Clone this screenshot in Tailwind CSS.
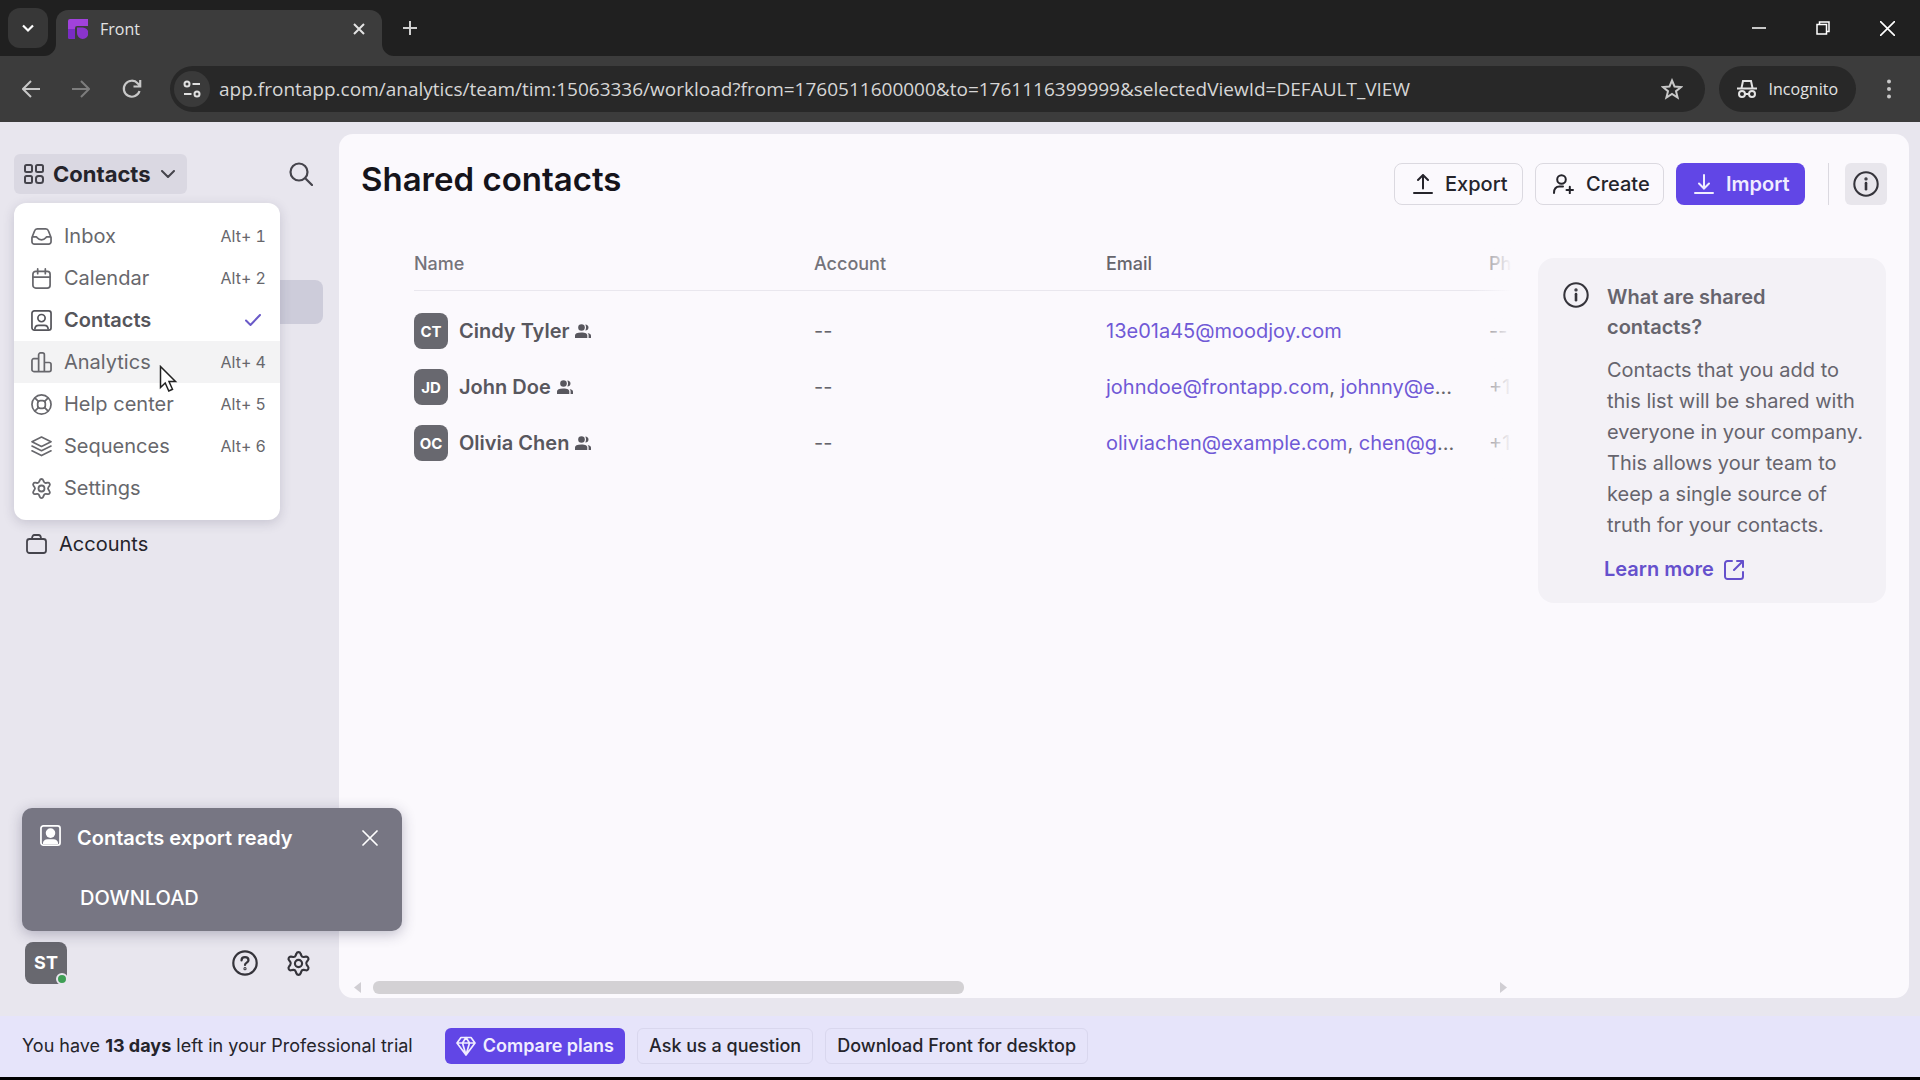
<!DOCTYPE html>
<html lang="en">
<head>
    <meta charset="UTF-8">
    <meta name="viewport" content="width=device-width, initial-scale=1.0">
    <title>Front</title>
    <script src="https://cdn.jsdelivr.net/npm/@tailwindcss/browser@4"></script>
</head>
<body class="bg-black font-['Inter',sans-serif] text-[#25242b]">

    <!-- shared icons -->
    <svg class="hidden">
        <symbol id="i-info" viewBox="0 0 24 24" fill="none" stroke="currentColor" stroke-width="1.9" stroke-linecap="round">
            <circle cx="12" cy="12" r="10.8"/><path d="M12 11.2v5.6" stroke-width="2.4"/><circle cx="12" cy="7.3" r=".6"/>
        </symbol>
        <symbol id="i-gear" viewBox="1.5 1.5 21 21" fill="none" stroke="currentColor" stroke-width="1.8" stroke-linejoin="round">
            <path d="M10.3 2.6c.5-1.5 2.9-1.5 3.4 0l.7 1.7c.3.8 1.200 1.300 2 1.200l1.900-.3c1.600-.2 2.700 1.800 1.700 3l-1.100 1.500c-.5.7-.5 1.700 0 2.400l1.100 1.600c1 1.300-.1 3.200-1.700 3l-1.900-.3c-.8-.1-1.700.4-2 1.200l-.7 1.800c-.6 1.500-2.800 1.500-3.400 0l-.7-1.800c-.3-.8-1.200-1.300-2-1.200l-1.900.3c-1.600.2-2.700-1.700-1.700-3l1.100-1.600c.5-.7.5-1.700 0-2.400L4 8.200c-1-1.200.1-3.200 1.700-3l1.900.3c.8.1 1.700-.4 2-1.200z" transform="translate(0 1)"/>
            <circle cx="12" cy="12" r="3"/>
        </symbol>
        <symbol id="i-people" viewBox="0 0 16 14" fill="currentColor">
            <circle cx="6.500" cy="3.500" r="3.300"/><path d="M0 14v-2.500C0 9.500 2 8.500 6.300 8.500s6 1 6 3V14zM10.300 6.500c1-1.700 1-4.200 0-6 2 .1 3.200 1.300 3.200 3s-1.300 3-3.200 3zM13.600 14v-2.600c0-1-.3-1.800-1-2.400 2.300.4 3.400 1.300 3.400 2.700V14z"/>
        </symbol>
        <symbol id="i-contact" viewBox="0 0 22 22" fill="none" stroke="currentColor" stroke-width="1.800">
            <rect x="1" y="1" width="20" height="20" rx="2.500"/><circle cx="11" cy="8.500" r="3.800"/><path d="M4 20.500c0-3 1.500-4.500 4-4.500h6c2.500 0 4 1.500 4 4.500"/>
        </symbol>
    </svg>

    <div class="flex h-screen flex-col overflow-hidden border-b-[3px] border-black bg-[#e8e6ee]">

        <!-- browser tabs -->
        <div class="flex h-14 shrink-0 bg-[#202020] font-['Open_Sans',sans-serif]">
            <button aria-label="Search tabs" class="mt-2 ml-2 grid size-10 place-items-center rounded-xl bg-[#373737] text-white">
                <svg class="size-3" viewBox="0 0 12 12" fill="none" stroke="currentColor" stroke-width="2.200"><path d="M1 3.500l5 5 5-5"/></svg>
            </button>
            <div class="relative mt-[10px] ml-2 flex w-[326px] items-center rounded-t-xl bg-[#3c3c3c] pr-[17px] pb-[9px] pl-3 text-[#e3e3e3]">
                <svg class="size-5" viewBox="0 0 20 20">
                    <path d="M0 2a2 2 0 0 1 2-2h18v7H9a2 2 0 0 0-2 2v11H2a2 2 0 0 1-2-2z" fill="#a142dc"/>
                    <path d="M0 10h7v10H2a2 2 0 0 1-2-2z" fill="#7a2cc4"/>
                    <path d="M9 8.500h5.500a5.700 5.700 0 1 1-5.500 5.700z" fill="#8a34cc"/>
                </svg>
                <span class="ml-3 flex-1 text-base">Front</span>
                <button aria-label="Close tab"><svg class="size-3" viewBox="0 0 12 12" stroke="currentColor" stroke-width="2"><path d="M1 1l10 10M11 1L1 11"/></svg></button>
                <svg class="absolute bottom-0 -left-3 size-3 text-[#3c3c3c]" viewBox="0 0 12 12" fill="currentColor"><path d="M12 0v12H0A12 12 0 0 0 12 0z"/></svg>
                <svg class="absolute -right-3 bottom-0 size-3 text-[#3c3c3c]" viewBox="0 0 12 12" fill="currentColor"><path d="M0 0v12h12A12 12 0 0 1 0 0z"/></svg>
            </div>
            <button aria-label="New tab" class="ml-5 text-[#d0d0d0]"><svg class="size-4" viewBox="0 0 16 16" stroke="currentColor" stroke-width="2"><path d="M8 1v14M1 8h14"/></svg></button>
            <div class="ml-auto flex items-center gap-[50px] pr-[25px] text-white">
                <button aria-label="Minimize"><svg class="size-[14px]" viewBox="0 0 14 14" stroke="currentColor" stroke-width="1.500"><path d="M0 7h14"/></svg></button>
                <button aria-label="Restore"><svg class="size-[14px]" viewBox="0 0 14 14" fill="none" stroke="currentColor" stroke-width="1.500"><path d="M1 3.500h9.500V13H1zM3.500 3.500V1H13v9.500h-2.500"/></svg></button>
                <button aria-label="Close"><svg class="size-[15px]" viewBox="0 0 14 14" stroke="currentColor" stroke-width="1.500"><path d="M0 0l14 14M14 0L0 14"/></svg></button>
            </div>
        </div>

        <!-- browser toolbar -->
        <div class="flex h-[66px] shrink-0 items-center bg-[#3c3c3c] pr-[26px] pl-[22px] font-['Open_Sans',sans-serif] text-[#c8c8c8]">
            <button aria-label="Back"><svg class="size-[18px]" viewBox="0 0 18 18" fill="none" stroke="currentColor" stroke-width="2"><path d="M18 9H1.500M9 1L1 9l8 8"/></svg></button>
            <button aria-label="Forward" class="ml-8 text-[#7d7d7d]"><svg class="size-[18px]" viewBox="0 0 18 18" fill="none" stroke="currentColor" stroke-width="2"><path d="M0 9h16.500M9 1l8 8-8 8"/></svg></button>
            <button aria-label="Reload" class="ml-8"><svg class="size-5" viewBox="0 0 20 20" fill="none" stroke="currentColor" stroke-width="2.200"><path d="M17.500 12A8 8 0 1 1 15.800 4.400L18 6.700M18.200 1v6.500H11.500"/></svg></button>
            <div class="ml-7 flex h-[46px] flex-1 items-center rounded-full bg-[#282828] pr-[22px] pl-1">
                <button aria-label="Site information" class="grid size-9 place-items-center rounded-full bg-[#3a3a3a] text-[#e0e0e0]">
                    <svg class="size-[18px]" viewBox="0 0 18 18" fill="none" stroke="currentColor" stroke-width="2"><circle cx="4" cy="4" r="2.500"/><path d="M9.500 4H17M1 14h7.500"/><circle cx="14" cy="14" r="2.500"/></svg>
                </button>
                <input type="text" aria-label="Address" value="app.frontapp.com/analytics/team/tim:15063336/workload?from=1760511600000&to=1761116399999&selectedViewId=DEFAULT_VIEW" class="ml-[9px] flex-1 bg-transparent text-[19px] text-[#d6d6d6] outline-none">
                <button aria-label="Bookmark"><svg class="size-[22px]" viewBox="0 0 22 22" fill="none" stroke="currentColor" stroke-width="2"><path d="M11 2.500l2.500 6 6.500.5-5 4.200 1.600 6.300L11 16l-5.600 3.500L7 13.200 2 9l6.500-.5z"/></svg></button>
            </div>
            <div class="ml-[14px] flex h-[46px] items-center gap-3 rounded-full bg-[#282828] px-[18px] text-base text-[#e3e3e3]">
                <svg class="size-5" viewBox="0 0 20 20" fill="none" stroke="currentColor" stroke-width="2"><path d="M0 9.500h20M4.500 9L6 2h8l1.500 7"/><circle cx="5" cy="15" r="3"/><circle cx="15" cy="15" r="3"/><path d="M8 15h4"/></svg>
                Incognito
            </div>
            <button aria-label="Menu" class="ml-7"><svg class="h-5 w-[10px]" viewBox="0 0 10 20" fill="currentColor"><circle cx="5" cy="2.500" r="2"/><circle cx="5" cy="10" r="2"/><circle cx="5" cy="17.500" r="2"/></svg></button>
        </div>

        <div class="flex min-h-0 flex-1 pt-3 pr-[11px] pb-[18px]">

            <!-- sidebar -->
            <nav class="relative flex w-[339px] shrink-0 flex-col px-[14px] pt-5">
                <div class="flex items-center justify-between pr-3">
                    <button class="flex h-10 items-center rounded-md bg-[#dad8e2] pr-3 pl-[10px] text-[22px] font-bold">
                        <svg class="size-5 text-[#45444c]" viewBox="0 0 20 20" fill="none" stroke="currentColor" stroke-width="2"><rect x="1" y="1" width="7" height="7" rx="1.500"/><rect x="12" y="1" width="7" height="7" rx="1.500"/><rect x="1" y="12" width="7" height="7" rx="1.500"/><rect x="12" y="12" width="7" height="7" rx="2.500"/></svg>
                        <span class="ml-[9px]">Contacts</span>
                        <svg class="ml-[10px] h-2 w-[14px] text-[#45444c]" viewBox="0 0 14 8" fill="none" stroke="currentColor" stroke-width="2" stroke-linecap="round" stroke-linejoin="round"><path d="M1 1l6 6 6-6"/></svg>
                    </button>
                    <button aria-label="Search"><svg class="size-6 text-[#45444c]" viewBox="0 0 24 24" fill="none" stroke="currentColor" stroke-width="2.200" stroke-linecap="round"><circle cx="10" cy="10" r="8.500"/><path d="M16.500 16.500L23 23"/></svg></button>
                </div>
                <a href="#" aria-label="Shared contacts" class="mt-[86px] h-11 w-[309px] rounded-lg bg-[#cdccda]"></a>
                <a href="#" class="mt-[198px] flex h-11 items-center gap-3 pl-3 text-xl">
                    <svg class="h-5 w-[21px] text-[#45444c]" viewBox="0 0 21 20" fill="none" stroke="currentColor" stroke-width="1.800"><rect x="1" y="5" width="19" height="14" rx="2.500"/><path d="M6 5c0-2.800 1-4 2.500-4h4C14 1 15 2.200 15 5"/></svg>
                    Accounts
                </a>
                <div class="mt-auto mb-[14px] flex items-center pr-[14px] pl-[11px] text-[#35343b]">
                    <div class="relative mr-auto flex size-[42px] items-center justify-center rounded-lg bg-[#68686f] text-lg leading-none font-bold text-white">
                        <span>ST</span><span class="absolute -right-px -bottom-px size-3 rounded-full border-2 border-[#e8e6ee] bg-[#3f9f55]"></span>
                    </div>
                    <button aria-label="Help"><svg class="size-[26px]" viewBox="0 0 26 26" fill="none" stroke="currentColor" stroke-width="2.200" stroke-linecap="round"><circle cx="13" cy="13" r="11.700"/><path d="M9.500 10.500c0-2 1.500-3.300 3.500-3.300s3.500 1.300 3.500 3.100c0 2.200-3.500 2.300-3.500 4.600"/><circle cx="13" cy="18.700" r=".5"/></svg></button>
                    <button aria-label="Settings" class="ml-7"><svg class="size-[25px]"><use href="#i-gear"/></svg></button>
                </div>

                <!-- app switcher -->
                <div class="absolute top-[69px] left-[14px] z-10 w-[266px] rounded-xl bg-white pt-3 pb-[11px] text-xl text-[#67676c] shadow-[0_3px_12px_rgba(50,45,80,0.18)]">
                    <button class="flex h-[42px] w-full items-center px-[14px] pl-[17px]">
                        <svg class="size-[21px]" viewBox="0 0 22 22" fill="none" stroke="currentColor" stroke-width="1.800" stroke-linejoin="round"><path d="M1 12v4.500A2.500 2.500 0 0 0 3.500 19h15a2.500 2.500 0 0 0 2.500-2.500V12l-2.800-7A3 3 0 0 0 15.500 3h-9a3 3 0 0 0-2.700 2zM1 11.500h4.500c1 0 1.500 3 5.500 3s4.500-3 5.500-3H21"/></svg>
                        <span class="ml-3">Inbox</span><span class="ml-auto text-base tabular-nums">Alt+ 1</span>
                    </button>
                    <button class="flex h-[42px] w-full items-center px-[14px] pl-[17px]">
                        <svg class="size-[21px]" viewBox="0 0 22 22" fill="none" stroke="currentColor" stroke-width="1.800" stroke-linecap="round"><rect x="2" y="3.500" width="18" height="17.500" rx="3"/><path d="M2 9.500h18M7 1v5M15 1v5"/></svg>
                        <span class="ml-3">Calendar</span><span class="ml-auto text-base tabular-nums">Alt+ 2</span>
                    </button>
                    <button class="flex h-[42px] w-full items-center px-[14px] pl-[17px] font-semibold text-[#55555b]">
                        <svg class="size-[21px]"><use href="#i-contact"/></svg>
                        <span class="ml-3">Contacts</span>
                        <svg class="mr-[5px] ml-auto h-3 w-4 text-[#6a5ac8]" viewBox="0 0 16 12" fill="none" stroke="currentColor" stroke-width="2" stroke-linecap="round"><path d="M1 6.500L5.500 11 15 1"/></svg>
                    </button>
                    <button class="flex h-[42px] w-full items-center bg-[#f3f3f4] px-[14px] pl-[17px]">
                        <svg class="size-[21px]" viewBox="0 0 22 22" fill="none" stroke="currentColor" stroke-width="1.800" stroke-linejoin="round"><path d="M8 20.500H3a2 2 0 0 1-2-2V9a2 2 0 0 1 2-2h5M8 20.500V3a2 2 0 0 1 2-2h2a2 2 0 0 1 2 2v17.500zM14 20.500h5a2 2 0 0 0 2-2V13a2 2 0 0 0-2-2h-5"/></svg>
                        <span class="ml-3">Analytics</span><span class="ml-auto text-base tabular-nums">Alt+ 4</span>
                    </button>
                    <button class="flex h-[42px] w-full items-center px-[14px] pl-[17px]">
                        <svg class="size-[21px]" viewBox="0 0 22 22" fill="none" stroke="currentColor" stroke-width="1.800"><circle cx="11" cy="11" r="10"/><rect x="7" y="7" width="8" height="8" rx="3"/><path d="M4 4l4 4M18 4l-4 4M4 18l4-4M18 18l-4-4"/></svg>
                        <span class="ml-3">Help center</span><span class="ml-auto text-base tabular-nums">Alt+ 5</span>
                    </button>
                    <button class="flex h-[42px] w-full items-center px-[14px] pl-[17px]">
                        <svg class="size-[21px]" viewBox="0 0 22 22" fill="none" stroke="currentColor" stroke-width="1.700" stroke-linejoin="round" stroke-linecap="round"><path d="M11 1l10 5-10 5L1 6zM1 10.500l10 5 10-5M1 15.500l10 5 10-5"/></svg>
                        <span class="ml-3">Sequences</span><span class="ml-auto text-base tabular-nums">Alt+ 6</span>
                    </button>
                    <button class="flex h-[42px] w-full items-center px-[14px] pl-[17px]">
                        <svg class="size-[21px]"><use href="#i-gear"/></svg>
                        <span class="ml-3">Settings</span>
                    </button>
                </div>

                <!-- export toast -->
                <div role="status" class="absolute bottom-[67px] left-[22px] z-20 h-[123px] w-[380px] rounded-[10px] bg-[#777683] pt-4 pr-6 pl-[18px] text-xl text-white shadow-[0_3px_14px_rgba(50,45,80,0.3)]">
                    <div class="flex">
                        <svg class="mt-px size-[21px]" viewBox="0 0 22 22"><rect x="1" y="1" width="20" height="20" rx="2.500" fill="none" stroke="currentColor" stroke-width="1.800"/><circle cx="11" cy="8.500" r="5" fill="currentColor"/><path d="M3 20c0-3.500 2-5 5-5h6c3 0 5 1.500 5 5z" fill="currentColor"/></svg>
                        <span class="ml-4 flex-1 leading-7 font-semibold">Contacts export ready</span>
                        <button aria-label="Dismiss"><svg class="size-4" viewBox="0 0 16 16" stroke="currentColor" stroke-width="1.700" stroke-linecap="round"><path d="M1 1l14 14M15 1L1 15"/></svg></button>
                    </div>
                    <button class="mt-8 ml-10 leading-7 font-medium">DOWNLOAD</button>
                </div>
            </nav>

            <!-- contacts panel -->
            <main class="flex min-w-0 flex-1 flex-col rounded-[14px] bg-[#fbf9fd]">
                <header class="flex items-start gap-3 pt-[29px] pr-[22px] pl-[22px]">
                    <h1 class="mr-auto text-[33px] leading-8 font-semibold text-[#15141b]">Shared contacts</h1>
                    <button class="flex h-[42px] w-[129px] items-center gap-3 rounded-lg border border-[#dbd9e0] pl-[18px] text-xl font-medium">
                        <svg class="size-5" viewBox="0 0 20 20" fill="none" stroke="currentColor" stroke-width="2" stroke-linecap="round"><path d="M10 14.500V1M5 6l5-5 5 5M1 19h18"/></svg>Export
                    </button>
                    <button class="flex h-[42px] w-[129px] items-center gap-3 rounded-lg border border-[#dbd9e0] pl-[17px] text-xl font-medium">
                        <svg class="h-5 w-[21px]" viewBox="0 0 21 20" fill="none" stroke="currentColor" stroke-width="2" stroke-linecap="round"><circle cx="8.500" cy="5.500" r="4.300"/><path d="M1 19c0-4.500 2-6.500 5.500-6.500H10M13.500 16H20M16.800 12.700v6.500"/></svg>Create
                    </button>
                    <button class="flex h-[42px] w-[129px] items-center gap-3 rounded-lg bg-[#6146e6] pl-[18px] text-xl font-semibold text-[#f0edff]">
                        <svg class="size-5" viewBox="0 0 20 20" fill="none" stroke="currentColor" stroke-width="2" stroke-linecap="round"><path d="M10 1v13.500M5 9.500l5 5 5-5M1 19h18"/></svg>Import
                    </button>
                    <span class="ml-[11px] h-[42px] w-px bg-[#dbd9e0]"></span>
                    <button aria-label="Details" class="ml-1 grid size-[42px] place-items-center rounded-md bg-[#e8e6ec] text-[#35343b]"><svg class="size-[26px]"><use href="#i-info"/></svg></button>
                </header>

                <div class="flex min-h-0 flex-1 pr-[23px]">
                    <section class="relative mr-[26px] flex min-w-0 flex-1 flex-col overflow-hidden pt-[34px] pl-[75px]">
                        <table class="w-[1500px] table-fixed text-left text-xl">
                            <thead class="text-lg text-[#74737a]">
                                <tr class="h-[51px] border-b border-[#e9e7ee]">
                                    <th class="w-[400px] font-medium">Name</th>
                                    <th class="w-[292px] font-medium">Account</th>
                                    <th class="w-[383px] font-medium text-[#66656c]">Email</th>
                                    <th class="font-medium">Phone</th>
                                </tr>
                            </thead>
                            <tbody class="text-[#66656c]">
                                <tr class="h-[13px]"></tr>
                                <tr class="h-14">
                                    <td><div class="flex items-center font-semibold text-[#58575e]"><span class="mr-[11px] grid h-9 w-[34px] place-items-center rounded-lg bg-[#68686f] text-[15px] font-bold text-white">CT</span>Cindy Tyler<svg class="ml-[6px] h-[14px] w-4"><use href="#i-people"/></svg></div></td>
                                    <td>--</td>
                                    <td><a href="#" class="text-[#7059d6]">13e01a45@moodjoy.com</a></td>
                                    <td>--</td>
                                </tr>
                                <tr class="h-14">
                                    <td><div class="flex items-center font-semibold text-[#58575e]"><span class="mr-[11px] grid h-9 w-[34px] place-items-center rounded-lg bg-[#68686f] text-[15px] font-bold text-white">JD</span>John Doe<svg class="ml-[6px] h-[14px] w-4"><use href="#i-people"/></svg></div></td>
                                    <td>--</td>
                                    <td><a href="#" class="text-[#7059d6]">johndoe@frontapp.com</a>, <a href="#" class="text-[#7059d6]">johnny@e</a>...</td>
                                    <td>+1</td>
                                </tr>
                                <tr class="h-14">
                                    <td><div class="flex items-center font-semibold text-[#58575e]"><span class="mr-[11px] grid h-9 w-[34px] place-items-center rounded-lg bg-[#68686f] text-[15px] font-bold text-white">OC</span>Olivia Chen<svg class="ml-[6px] h-[14px] w-4"><use href="#i-people"/></svg></div></td>
                                    <td>--</td>
                                    <td><a href="#" class="text-[#7059d6]">oliviachen@example.com</a>, <a href="#" class="text-[#7059d6]">chen@g</a>...</td>
                                    <td>+1</td>
                                </tr>
                            </tbody>
                        </table>
                        <!-- fade at the scroll edge -->
                        <div class="absolute top-0 right-0 h-72 w-10 bg-linear-to-r from-transparent to-[#fbf9fd]"></div>
                        <div class="mt-auto mb-1 -ml-[60px] flex h-[13px] items-center text-[#d0ced3]">
                            <svg class="h-[13px] w-2" viewBox="0 0 8 13" fill="currentColor"><path d="M7 1v11L0 6.500z"/></svg>
                            <div class="mr-auto ml-[11px] h-[13px] w-[51%] rounded-md bg-[#d3d1d4]"></div>
                            <svg class="mr-1 h-[13px] w-2" viewBox="0 0 8 13" fill="currentColor"><path d="M0 1v11l7-5.500z"/></svg>
                        </div>
                    </section>

                    <aside class="mt-[53px] flex w-[348px] shrink-0 self-start rounded-2xl bg-[#f3f1f6] pt-6 pr-6 pb-[18px] pl-[25px] text-xl text-[#66646d]">
                        <svg class="size-[26px] shrink-0 text-[#35343b]"><use href="#i-info"/></svg>
                        <div class="ml-[18px]">
                            <h2 class="leading-[30px] font-semibold">What are shared<br>contacts?</h2>
                            <p class="mt-[13px] leading-[31px] whitespace-nowrap">Contacts that you add to<br>this list will be shared with<br>everyone in your company.<br>This allows your team to<br>keep a single source of<br>truth for your contacts.</p>
                            <a href="#" class="mt-[13px] -ml-[3px] flex items-center gap-[10px] leading-[31px] font-semibold text-[#6550cc]">Learn more
                                <svg class="size-5" viewBox="0 0 20 20" fill="none" stroke="currentColor" stroke-width="2" stroke-linecap="round" stroke-linejoin="round"><path d="M8 1H3.500A2.500 2.500 0 0 0 1 3.500v13A2.500 2.500 0 0 0 3.500 19h13a2.500 2.500 0 0 0 2.500-2.500V12M13 1h6v6M19 1l-9 9"/></svg>
                            </a>
                        </div>
                    </aside>
                </div>
            </main>
        </div>

        <!-- trial banner -->
        <footer class="flex h-[61px] shrink-0 items-center gap-3 bg-[#e6e4fa] pb-[2px] pl-[22px] text-lg">
            <p class="mr-5">You have <b class="font-bold">13 days</b> left in your Professional trial</p>
            <button class="flex h-9 items-center gap-[7px] rounded-md bg-[#6146e6] px-[11px] font-semibold text-[#f0edff]">
                <svg class="size-5" viewBox="0 0 20 20" fill="none" stroke="currentColor" stroke-width="1.700" stroke-linejoin="round"><path d="M5 1.500h10l4 5.500-9 12L1 7zM1 7h18M10 1.500L6.500 7l3.500 12L13.500 7z"/></svg>Compare plans
            </button>
            <button class="h-9 rounded-md border border-[#d9d7ee] px-[11px] font-medium">Ask us a question</button>
            <button class="h-9 rounded-md border border-[#d9d7ee] px-[11px] font-medium">Download Front for desktop</button>
        </footer>
    </div>

    <!-- mouse pointer -->
    <svg class="pointer-events-none absolute top-[365px] left-[159px] z-30 h-[29px] w-[19px]" viewBox="0 0 19 29"><path d="M1.500 1.500v21l4.700-4.500 3.600 8 3.700-1.700-3.500-7.800h6.500z" fill="#fff" stroke="#222" stroke-width="1.500"/></svg>
</body>
</html>
